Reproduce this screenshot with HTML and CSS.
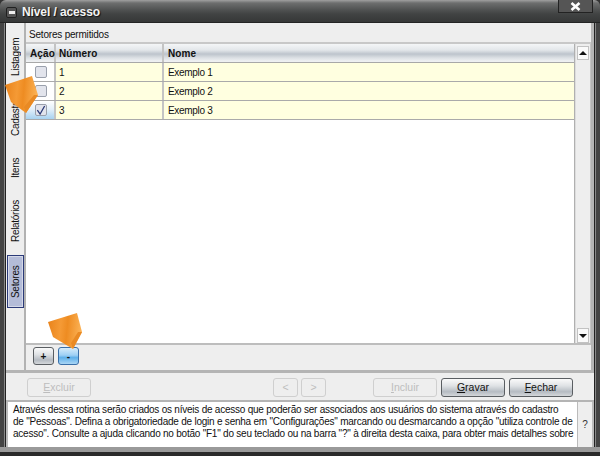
FILE: index.html
```html
<!DOCTYPE html>
<html lang="pt">
<head>
<meta charset="utf-8">
<title>Nível / acesso</title>
<link rel="stylesheet" href="styles.css">
</head>
<body>
<div class="window">
  <header class="titlebar">
    <span class="sysbtn"><span class="sysdash"></span></span>
    <span class="title">Nível / acesso</span>
    <span class="closebtn">
      <svg width="11" height="9" viewBox="0 0 11 9"><path d="M1.5 1 L9.5 8 M9.5 1 L1.5 8" stroke="#fff" stroke-width="2.6" fill="none"/></svg>
    </span>
  </header>
  <div class="content">
    <div class="main">
      <nav class="tabs">
        <span class="tab tab-list">Listagem</span>
        <span class="tab tab-cad">Cadastro</span>
        <span class="tab tab-items">Itens</span>
        <span class="tab tab-rep">Relatórios</span>
        <span class="tab tab-sel">Setores</span>
      </nav>
      <section class="panel">
        <div class="caption">Setores permitidos</div>
        <div class="tablewrap">
          <div class="grid">
            <div class="row head">
              <div class="c c1">Ação</div>
              <div class="c c2">Número</div>
              <div class="c c3">Nome</div>
            </div>
            <div class="row">
              <div class="c c1"><span class="check"></span></div>
              <div class="c c2">1</div>
              <div class="c c3">Exemplo 1</div>
            </div>
            <div class="row">
              <div class="c c1"><span class="check"></span></div>
              <div class="c c2">2</div>
              <div class="c c3">Exemplo 2</div>
            </div>
            <div class="row">
              <div class="c c1 selected"><span class="check">
                <svg width="11" height="11" viewBox="0 0 11 11"><path d="M1.5 5 L4.5 9.5 L9.5 0.5" stroke="#2b3a78" stroke-width="1.4" fill="none"/></svg>
              </span></div>
              <div class="c c2">3</div>
              <div class="c c3">Exemplo 3</div>
            </div>
          </div>
          <div class="scrollbar">
            <span class="sbtn"><span class="tri-up"></span></span>
            <span class="sbtn sbtn-down"><span class="tri-down"></span></span>
          </div>
        </div>
        <div class="toolbar">
          <button class="btn small">+</button>
          <button class="btn small active">-</button>
        </div>
      </section>
    </div>
    <div class="actions">
      <button class="btn wide off"><u>E</u>xcluir</button>
      <span class="spacer s1"></span>
      <button class="btn nav off">&lt;</button>
      <button class="btn nav off">&gt;</button>
      <span class="spacer s2"></span>
      <button class="btn wide off"><u>I</u>ncluir</button>
      <button class="btn wide"><u>G</u>ravar</button>
      <button class="btn wide"><u>F</u>echar</button>
    </div>
    <div class="help">
      <p class="helptext">Através dessa rotina serão criados os níveis de acesso que poderão ser associados aos usuários do sistema através do cadastro<br>de "Pessoas". Defina a obrigatoriedade de login e senha em "Configurações" marcando ou desmarcando a opção "utiliza controle de<br>acesso". Consulte a ajuda clicando no botão "F1" do seu teclado ou na barra "?" à direita desta caixa, para obter mais detalhes sobre</p>
      <span class="helpq">?</span>
    </div>
  </div>
  <svg class="pointer p1" width="36" height="40" viewBox="0 0 36 40"><defs><linearGradient id="o1" x1="0" x2="1" y1="0" y2="0.1"><stop offset="0" stop-color="#e8821a"/><stop offset="0.4" stop-color="#f59a35"/><stop offset="0.6" stop-color="#ee8c22"/><stop offset="1" stop-color="#fbb154"/></linearGradient></defs><polygon points="0,9 27,0 33,19 21,37 6,26" fill="url(#o1)"/><polygon points="33,19 21,37 19,31 29,19" fill="#e98a24"/></svg>
  <svg class="pointer p2" width="36" height="40" viewBox="0 0 36 40"><polygon points="0,9 29,0 34,19 25,36 5,24" fill="url(#o1)"/><polygon points="34,19 25,36 23,30 30,19" fill="#e98a24"/></svg>
</div>
</body>
</html>
```
FILE: styles.css
```css
* { box-sizing: border-box; }
html, body { margin: 0; padding: 0; }
body { width: 600px; height: 456px; overflow: hidden; background: #333; font-family: "Liberation Sans", Arial, sans-serif; }
.window { position: relative; width: 600px; height: 456px; display: flex; flex-direction: column; padding: 0 5px 9px 5px;
  background: linear-gradient(to top, #2a2a2a 4px, #9a9a9a 4px, #9a9a9a 9px, #444 9px); border-radius: 6px 6px 0 0; }
.titlebar { height: 23px; flex: none; margin: 0 -5px; padding: 0 7px 0 6px; display: flex; align-items: center; gap: 5px;
  background: linear-gradient(#a0a0a0 0, #6d6e6e 3px, #4f5151 10px, #414343 14px, #363737 22px, #111 23px); border-radius: 6px 6px 0 0; }
.sysbtn { width: 11px; height: 11px; margin-top: 1px; border: 1px solid #202020; border-radius: 2px; background: #555; display: flex; align-items: center; justify-content: center; }
.sysdash { width: 6px; height: 3px; background: #eee; }
.title { flex: 1; color: #f4f4f4; font-size: 12px; font-weight: bold; letter-spacing: -0.1px; margin-top: 1px; text-shadow: 1px 1px 1px #111; }
.closebtn { width: 35px; height: 13px; margin-top: -10px; border: 1px solid #222; border-top: 0; background: #555; display: flex; align-items: center; justify-content: center; }
.content { flex: 1; display: flex; flex-direction: column; background: #eee; border: 1px solid #222; border-top: 0; border-bottom: 0; box-shadow: 1px 0 0 #888, -1px 0 0 #888; font-size: 10px; letter-spacing: -0.3px; color: #111; }
.main { height: 350px; flex: none; display: flex; border-bottom: 3px solid #b4b4b4; border-right: 3px solid #b4b4b4; }
.tabs { width: 20px; flex: none; display: flex; flex-direction: column; align-items: stretch; border-right: 2px solid #b2b2b2; }
.tab { writing-mode: vertical-rl; transform: rotate(180deg); text-align: center; font-size: 10px; flex: none; line-height: 17px; width: 17px; margin-left: 1px; }
.tab-list { height: 50px; margin-top: 9px; }
.tab-cad { height: 50px; margin-top: 10px; }
.tab-items { height: 30px; margin-top: 11px; }
.tab-rep { height: 50px; margin-top: 13px; }
.tab-sel { height: 53px; margin-top: 9px; background: #b4bcd8; border: 1px solid #2b3a78; box-shadow: inset 0 0 0 1px #d5d9e8; line-height: 15px; }
.panel { flex: 1; display: flex; flex-direction: column; min-width: 0; }
.caption { height: 21px; flex: none; padding: 5px 0 0 3px; line-height: 13px; letter-spacing: -0.2px; border-bottom: 2px solid #c8c8c8; }
.tablewrap { height: 301px; flex: none; display: flex; background: #fff; border-bottom: 2px solid #bdbdbd; }
.grid { width: 549px; flex: none; display: flex; flex-direction: column; border-right: 1px solid #b0b0b0; }
.row { display: flex; height: 19px; flex: none; background: #ffffe0; border-bottom: 1px solid #aaa; }
.head { background: linear-gradient(#f4f6f7 0, #e3e7ea 6px, #bdc4cc 10px, #dde1e5 14px, #eef0f2 17px); border-bottom: 1px solid #a8a8a8; font-weight: bold; letter-spacing: 0.1px; }
.c { display: flex; align-items: center; padding-left: 3px; border-right: 1px solid #b2b2b2; line-height: 13px; }
.c1 { width: 30px; padding-left: 4px; flex: none; background: inherit; border-right: 2px solid #c4c4c4; }
.row:not(.head) .c1 { background: #fff; justify-content: center; padding: 0 0 0 1px; }
.row:not(.head) .c1.selected { background: linear-gradient(#fff 0, #e4f0fa 45%, #a8d2f0 100%); }
.c2 { width: 108px; flex: none; border-right: 2px solid #c4c4c4; }
.c3 { flex: 1; border-right: 0; padding-left: 4px; }
.check { width: 12px; height: 12px; border: 1px solid #9aa0ac; border-radius: 2px; background: #e2e4ec; display: flex; align-items: center; justify-content: center; }
.scrollbar { flex: 1; display: flex; flex-direction: column; justify-content: space-between; padding: 2px 1px 0 1px; background: #eee; border-left: 1px solid #ddd; border-right: 1px solid #c4c4c4; }
.sbtn { height: 14px; background: #fafafa; border: 1px solid #c2c2c2; display: flex; align-items: center; justify-content: center; }
.sbtn-down { height: 15px; }
.tri-up { border-left: 4px solid transparent; border-right: 4px solid transparent; border-bottom: 4px solid #111; }
.tri-down { border-left: 4px solid transparent; border-right: 4px solid transparent; border-top: 4px solid #111; }
.toolbar { flex: 1; display: flex; gap: 4px; padding: 2px 0 0 7px; }
.btn { font: inherit; letter-spacing: 0; font-size: 10.5px; height: 19px; padding: 0; color: #111; border: 1px solid #5a5e62; border-radius: 3px; background: linear-gradient(#fafafa 0, #dfe2e5 40%, #b5bbc2 75%, #d4d7da 100%); text-align: center; }
.small { width: 21px; font-weight: bold; font-size: 10px; height: 18px; }
.active { border-color: #3a6fa8; background: linear-gradient(#d6ecfb 0, #9ed0f5 45%, #5fb0ea 60%, #aad6f5 100%); }
.actions { height: 29px; flex: none; display: flex; align-items: center; padding: 1px 0 0 21px; gap: 4px; border-bottom: 2px solid #b4b4b4; }
.wide { width: 64px; }
.nav { width: 25px; margin-right: -1px; }
.off { background: #eee; border-color: #cfcfcf; color: #bdbdbd; }
.s1 { width: 174px; }
.s2 { width: 40px; }
.help { flex: 1; display: flex; gap: 1px; background: #bbb; min-height: 0; padding: 0 2px; }
.helptext { flex: 1; margin: 0; padding: 2px 3px 0 5px; background: #fff; line-height: 12px; letter-spacing: -0.23px; white-space: nowrap; overflow: hidden; }
.helpq { width: 14px; flex: none; background: #eee; color: #333; display: flex; align-items: center; justify-content: center; font-size: 10px; }
.pointer { position: absolute; }
.p1 { left: 5px; top: 76px; }
.p2 { left: 48px; top: 313px; }
```
